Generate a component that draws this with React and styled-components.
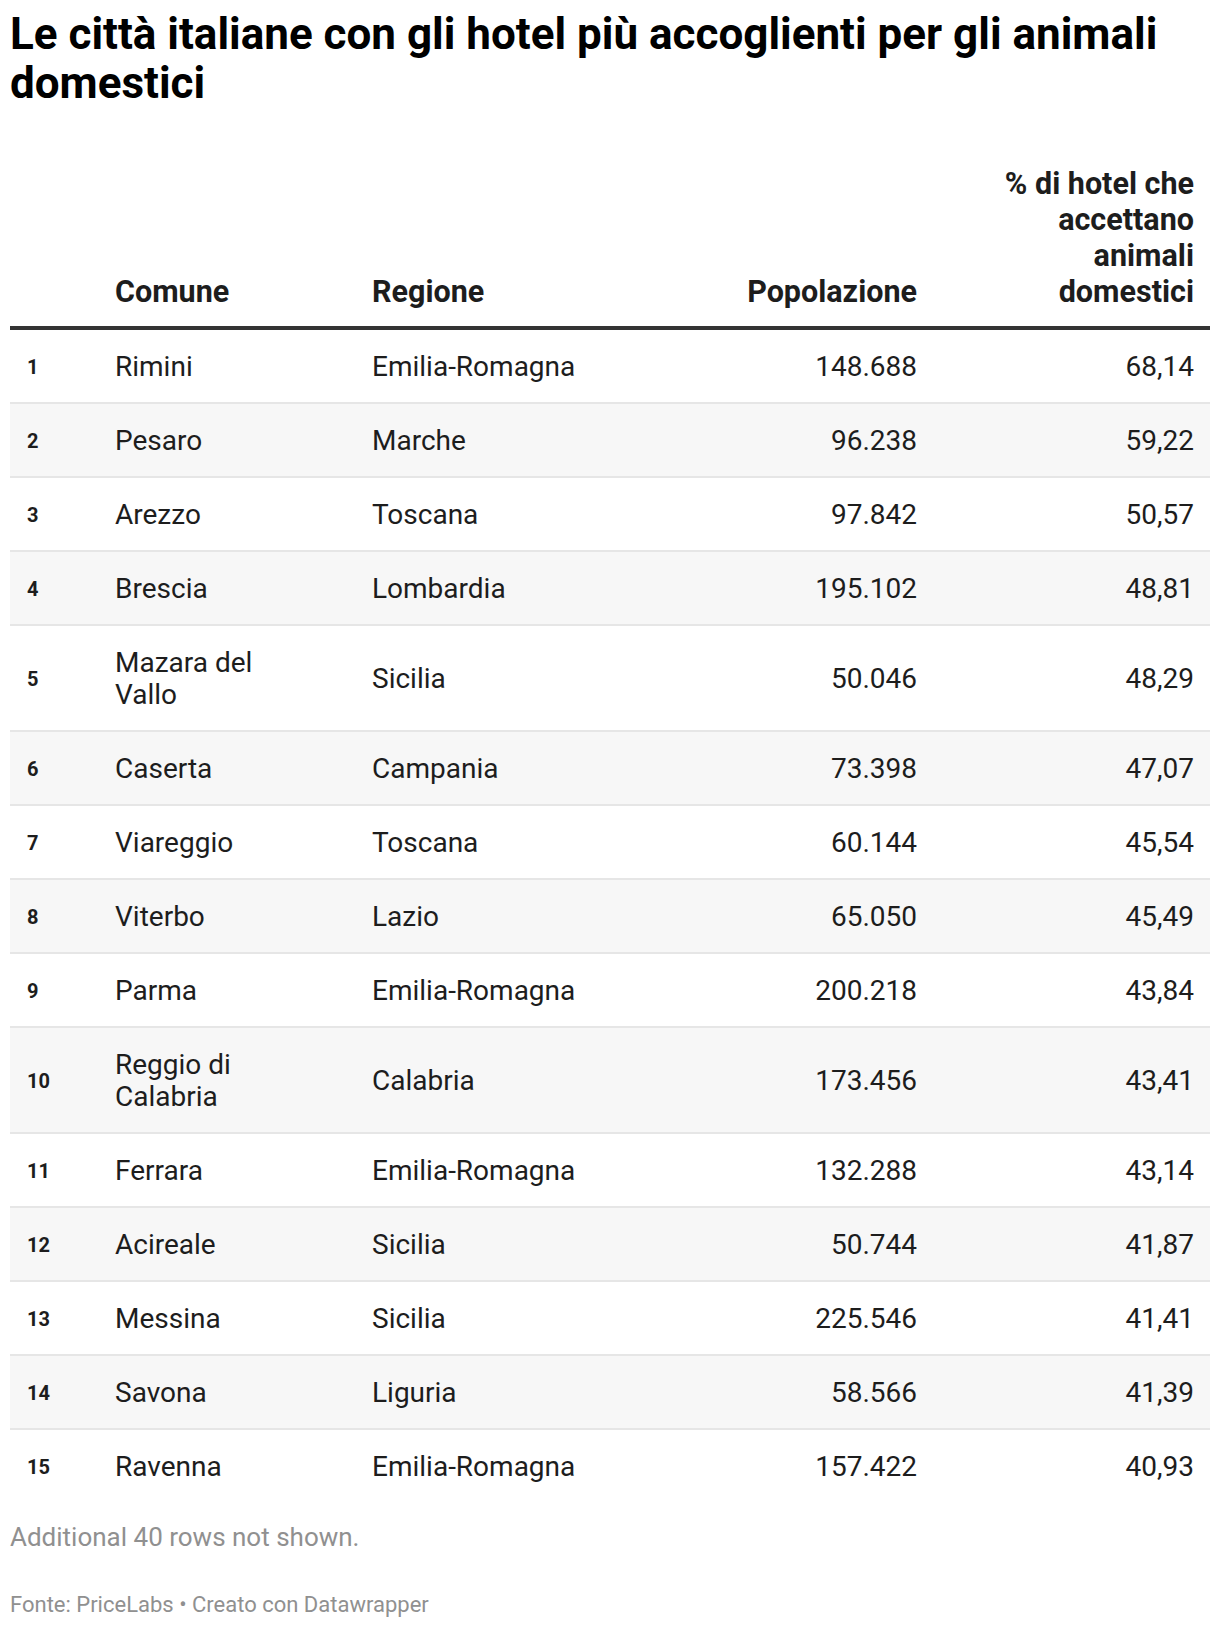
import React from 'react';
import styled, { createGlobalStyle } from 'styled-components';

const GlobalStyle = createGlobalStyle`
  html, body {
    margin: 0;
    padding: 0;
    background: #ffffff;
  }
  body {
    font-family: Roboto, "Liberation Sans", sans-serif;
    color: #1d1d1d;
  }
`;

const Chart = styled.div`
  padding: 10px 10px 0 10px;
  width: 1200px;
`;

const Title = styled.h1`
  margin: 0;
  font-size: 44px;
  line-height: 49px;
  font-weight: 700;
  color: #000000;
`;

const columns = '105px 257px 300px 261px 277px';

const HeaderRow = styled.div`
  display: grid;
  grid-template-columns: ${columns};
  align-items: end;
  margin-top: 58px;
  padding-bottom: 16px;
  border-bottom: 4px solid #333333;
`;

const HeadCell = styled.div`
  font-size: 30.5px;
  line-height: 36px;
  font-weight: 700;
  color: #1d1d1d;
  text-align: ${p => (p.$right ? 'right' : 'left')};
  padding: ${p => p.$pad || '0'};
`;

const Row = styled.div`
  display: grid;
  grid-template-columns: ${columns};
  align-items: center;
  padding: 21px 0 19px;
  background: ${p => (p.$striped ? '#f7f7f7' : '#ffffff')};
  border-bottom: 2px solid ${p => (p.$last ? 'transparent' : '#e6e6e6')};
  margin-bottom: ${p => (p.$last ? '-2px' : '0')};
`;

const Rank = styled.div`
  padding-left: 17px;
  font-size: 20px;
  font-weight: 700;
  color: #1d1d1d;
`;

const Cell = styled.div`
  font-size: 28px;
  line-height: 32px;
  color: #1d1d1d;
  text-align: ${p => (p.$right ? 'right' : 'left')};
  padding: ${p => p.$pad || '0'};
`;

const Note = styled.p`
  margin: 20px 0 0;
  font-size: 26px;
  line-height: normal;
  color: #909090;
`;

const Source = styled.p`
  margin: 40px 0 0;
  font-size: 22px;
  line-height: normal;
  color: #909090;
`;

const rows = [
  ['Rimini', 'Emilia-Romagna', '148.688', '68,14'],
  ['Pesaro', 'Marche', '96.238', '59,22'],
  ['Arezzo', 'Toscana', '97.842', '50,57'],
  ['Brescia', 'Lombardia', '195.102', '48,81'],
  ['Mazara del Vallo', 'Sicilia', '50.046', '48,29'],
  ['Caserta', 'Campania', '73.398', '47,07'],
  ['Viareggio', 'Toscana', '60.144', '45,54'],
  ['Viterbo', 'Lazio', '65.050', '45,49'],
  ['Parma', 'Emilia-Romagna', '200.218', '43,84'],
  ['Reggio di Calabria', 'Calabria', '173.456', '43,41'],
  ['Ferrara', 'Emilia-Romagna', '132.288', '43,14'],
  ['Acireale', 'Sicilia', '50.744', '41,87'],
  ['Messina', 'Sicilia', '225.546', '41,41'],
  ['Savona', 'Liguria', '58.566', '41,39'],
  ['Ravenna', 'Emilia-Romagna', '157.422', '40,93']
];

const App = () => (
  <>
    <GlobalStyle />
    <Chart>
      <Title>Le città italiane con gli hotel più accoglienti per gli animali domestici</Title>
      <HeaderRow>
        <HeadCell />
        <HeadCell $pad="0 87px 0 0">Comune</HeadCell>
        <HeadCell>Regione</HeadCell>
        <HeadCell $right $pad="0 16px 0 0">Popolazione</HeadCell>
        <HeadCell $right $pad="0 16px 0 57px">% di hotel che accettano animali domestici</HeadCell>
      </HeaderRow>
      {rows.map(([comune, regione, pop, pct], i) => (
        <Row key={comune} $striped={i % 2 === 1} $last={i === rows.length - 1}>
          <Rank>{i + 1}</Rank>
          <Cell $pad="0 87px 0 0">{comune}</Cell>
          <Cell>{regione}</Cell>
          <Cell $right $pad="0 16px 0 0">{pop}</Cell>
          <Cell $right $pad="0 16px 0 57px">{pct}</Cell>
        </Row>
      ))}
      <Note>Additional 40 rows not shown.</Note>
      <Source>Fonte: PriceLabs • Creato con Datawrapper</Source>
    </Chart>
  </>
);

export default App;
